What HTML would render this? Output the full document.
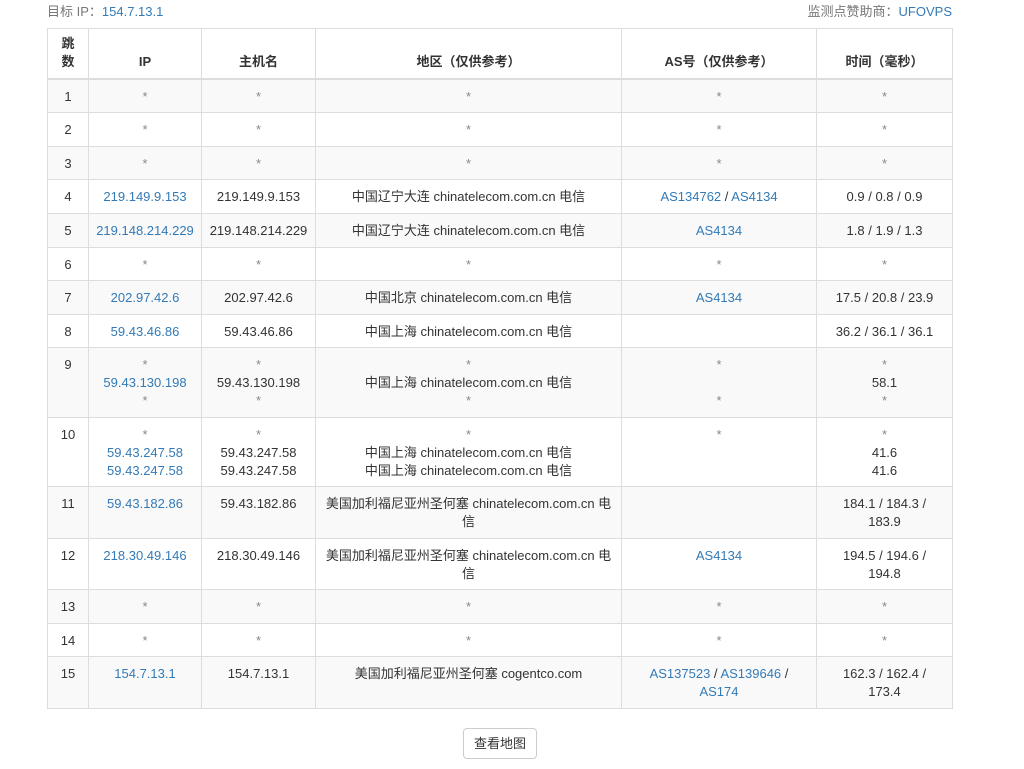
<!DOCTYPE html>
<html><head><meta charset="utf-8"><style>
body{margin:0;background:#fff;font-family:"Liberation Sans","Noto Sans CJK SC",sans-serif;font-size:13px;color:#333;}
.top{position:absolute;top:3px;left:47px;width:905px;height:18px;line-height:18px;color:#777;}
.top .r{position:absolute;right:0;top:0}
a{color:#337ab7;text-decoration:none}
table{position:absolute;left:47px;top:28px;border-collapse:collapse;table-layout:fixed;width:905px}
td,th{border:1px solid #ddd;text-align:center;vertical-align:top;padding:8px 2px 0;line-height:18px;box-sizing:border-box}
th{font-weight:bold;vertical-align:bottom;padding:3px 2px 7px;border-bottom:2px solid #ddd}
tbody tr:nth-child(odd){background:#f9f9f9}
.s{color:#888}
.btn{position:absolute;left:463px;top:728px;width:74px;height:31px;box-sizing:border-box;border:1px solid #ccc;border-radius:4px;text-align:center;line-height:29px;background:#fff}
</style></head><body>
<div class="top">目标 IP：<a>154.7.13.1</a><span class="r">监测点赞助商：<a>UFOVPS</a></span></div>
<table>
<colgroup><col style="width:41px"><col style="width:113px"><col style="width:114px"><col style="width:306px"><col style="width:195px"><col style="width:136px"></colgroup>
<thead><tr style="height:50px"><th>跳<br>数</th><th>IP</th><th>主机名</th><th>地区（仅供参考）</th><th>AS号（仅供参考）</th><th>时间（毫秒）</th></tr></thead>
<tbody>
<tr style="height:34px"><td>1</td><td class="s">*</td><td class="s">*</td><td class="s">*</td><td class="s">*</td><td class="s">*</td></tr>
<tr style="height:34px"><td>2</td><td class="s">*</td><td class="s">*</td><td class="s">*</td><td class="s">*</td><td class="s">*</td></tr>
<tr style="height:33px"><td>3</td><td class="s">*</td><td class="s">*</td><td class="s">*</td><td class="s">*</td><td class="s">*</td></tr>
<tr style="height:34px"><td>4</td><td><a>219.149.9.153</a></td><td>219.149.9.153</td><td>中国辽宁大连 chinatelecom.com.cn 电信</td><td><a>AS134762</a> / <a>AS4134</a></td><td>0.9 / 0.8 / 0.9</td></tr>
<tr style="height:34px"><td>5</td><td><a>219.148.214.229</a></td><td>219.148.214.229</td><td>中国辽宁大连 chinatelecom.com.cn 电信</td><td><a>AS4134</a></td><td>1.8 / 1.9 / 1.3</td></tr>
<tr style="height:33px"><td>6</td><td class="s">*</td><td class="s">*</td><td class="s">*</td><td class="s">*</td><td class="s">*</td></tr>
<tr style="height:34px"><td>7</td><td><a>202.97.42.6</a></td><td>202.97.42.6</td><td>中国北京 chinatelecom.com.cn 电信</td><td><a>AS4134</a></td><td>17.5 / 20.8 / 23.9</td></tr>
<tr style="height:33px"><td>8</td><td><a>59.43.46.86</a></td><td>59.43.46.86</td><td>中国上海 chinatelecom.com.cn 电信</td><td></td><td>36.2 / 36.1 / 36.1</td></tr>
<tr style="height:70px"><td>9</td><td><span class="s">*</span><br><a>59.43.130.198</a><br><span class="s">*</span></td><td><span class="s">*</span><br>59.43.130.198<br><span class="s">*</span></td><td><span class="s">*</span><br>中国上海 chinatelecom.com.cn 电信<br><span class="s">*</span></td><td><span class="s">*</span><br>&nbsp;<br><span class="s">*</span></td><td><span class="s">*</span><br>58.1<br><span class="s">*</span></td></tr>
<tr style="height:69px"><td>10</td><td><span class="s">*</span><br><a>59.43.247.58</a><br><a>59.43.247.58</a></td><td><span class="s">*</span><br>59.43.247.58<br>59.43.247.58</td><td><span class="s">*</span><br>中国上海 chinatelecom.com.cn 电信<br>中国上海 chinatelecom.com.cn 电信</td><td class="s">*</td><td><span class="s">*</span><br>41.6<br>41.6</td></tr>
<tr style="height:52px"><td>11</td><td><a>59.43.182.86</a></td><td>59.43.182.86</td><td>美国加利福尼亚州圣何塞 chinatelecom.com.cn 电<br>信</td><td></td><td>184.1 / 184.3 /<br>183.9</td></tr>
<tr style="height:51px"><td>12</td><td><a>218.30.49.146</a></td><td>218.30.49.146</td><td>美国加利福尼亚州圣何塞 chinatelecom.com.cn 电<br>信</td><td><a>AS4134</a></td><td>194.5 / 194.6 /<br>194.8</td></tr>
<tr style="height:34px"><td>13</td><td class="s">*</td><td class="s">*</td><td class="s">*</td><td class="s">*</td><td class="s">*</td></tr>
<tr style="height:33px"><td>14</td><td class="s">*</td><td class="s">*</td><td class="s">*</td><td class="s">*</td><td class="s">*</td></tr>
<tr style="height:52px"><td>15</td><td><a>154.7.13.1</a></td><td>154.7.13.1</td><td>美国加利福尼亚州圣何塞 cogentco.com</td><td><a>AS137523</a> / <a>AS139646</a> /<br><a>AS174</a></td><td>162.3 / 162.4 /<br>173.4</td></tr>
</tbody></table>
<div class="btn">查看地图</div>
</body></html>
